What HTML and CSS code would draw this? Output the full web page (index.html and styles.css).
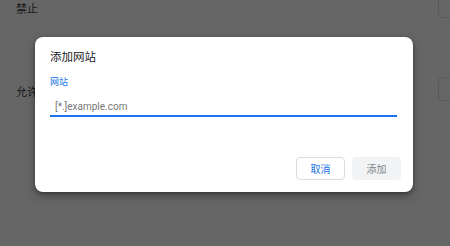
FILE: index.html
```html
<!DOCTYPE html>
<html lang="zh">
<head>
<meta charset="utf-8">
<link rel="stylesheet" href="styles.css">
</head>
<body>
<div class="page">
  <div class="row row-top">
    <span class="row-label">禁止</span>
    <span class="row-btn"></span>
  </div>
  <div class="row row-mid">
    <span class="row-label">允许</span>
    <span class="row-btn"></span>
  </div>
</div>
<div class="overlay">
  <div class="dialog">
    <div class="title">添加网站</div>
    <div class="field">
      <div class="label">网站</div>
      <div class="input"><span class="placeholder">[*.]example.com</span></div>
    </div>
    <div class="actions">
      <button class="btn cancel">取消</button>
      <button class="btn add">添加</button>
    </div>
  </div>
</div>
</body>
</html>
```

FILE: styles.css
```css
html, body {
  margin: 0;
  padding: 0;
  width: 450px;
  height: 246px;
  overflow: hidden;
}
body {
  background: #666666;
  font-family: Roboto, "Noto Sans CJK SC", sans-serif;
  position: relative;
}
.page {
  display: flex;
  flex-direction: column;
  padding-left: 16px;
}
.row {
  display: flex;
  justify-content: space-between;
  align-items: flex-start;
}
.row-top {
  margin-top: -6px;
  height: 83px;
}
.row-label {
  font-size: 11px;
  color: #161616;
  line-height: 16px;
  margin-top: 8px;
}
.row-btn {
  width: 30px;
  height: 22px;
  border: 1px solid #5a5a5a;
  border-radius: 4px;
  margin-right: -20px;
}
.overlay {
  position: absolute;
  inset: 0;
}
.dialog {
  position: absolute;
  left: 35px;
  top: 37px;
  width: 378px;
  height: 155px;
  box-sizing: border-box;
  background: #ffffff;
  border-radius: 8px;
  box-shadow: 0 4px 10px rgba(0,0,0,0.35), 0 1px 3px rgba(0,0,0,0.3);
  padding: 12px 12px 12px 15px;
  display: flex;
  flex-direction: column;
}
.title {
  font-size: 11.5px;
  line-height: 16px;
  color: #202124;
}
.field {
  margin-top: 11px;
  padding-right: 4px;
}
.label {
  font-size: 9px;
  line-height: 12px;
  color: #1a73e8;
}
.input {
  margin-top: 9px;
  height: 18px;
  border-bottom: 2px solid #1a73e8;
  padding-left: 5px;
  display: flex;
  align-items: center;
}
.placeholder {
  font-size: 10px;
  color: #777777;
}
.actions {
  margin-top: auto;
  display: flex;
  justify-content: flex-end;
  gap: 7px;
}
.btn {
  width: 49px;
  height: 23px;
  box-sizing: border-box;
  border-radius: 4px;
  font-family: Roboto, "Noto Sans CJK SC", sans-serif;
  font-size: 10px;
  padding: 0;
}
.cancel {
  background: #ffffff;
  border: 1px solid #dadce0;
  color: #1a73e8;
}
.add {
  background: #f1f3f4;
  border: none;
  color: #80868b;
}
```
